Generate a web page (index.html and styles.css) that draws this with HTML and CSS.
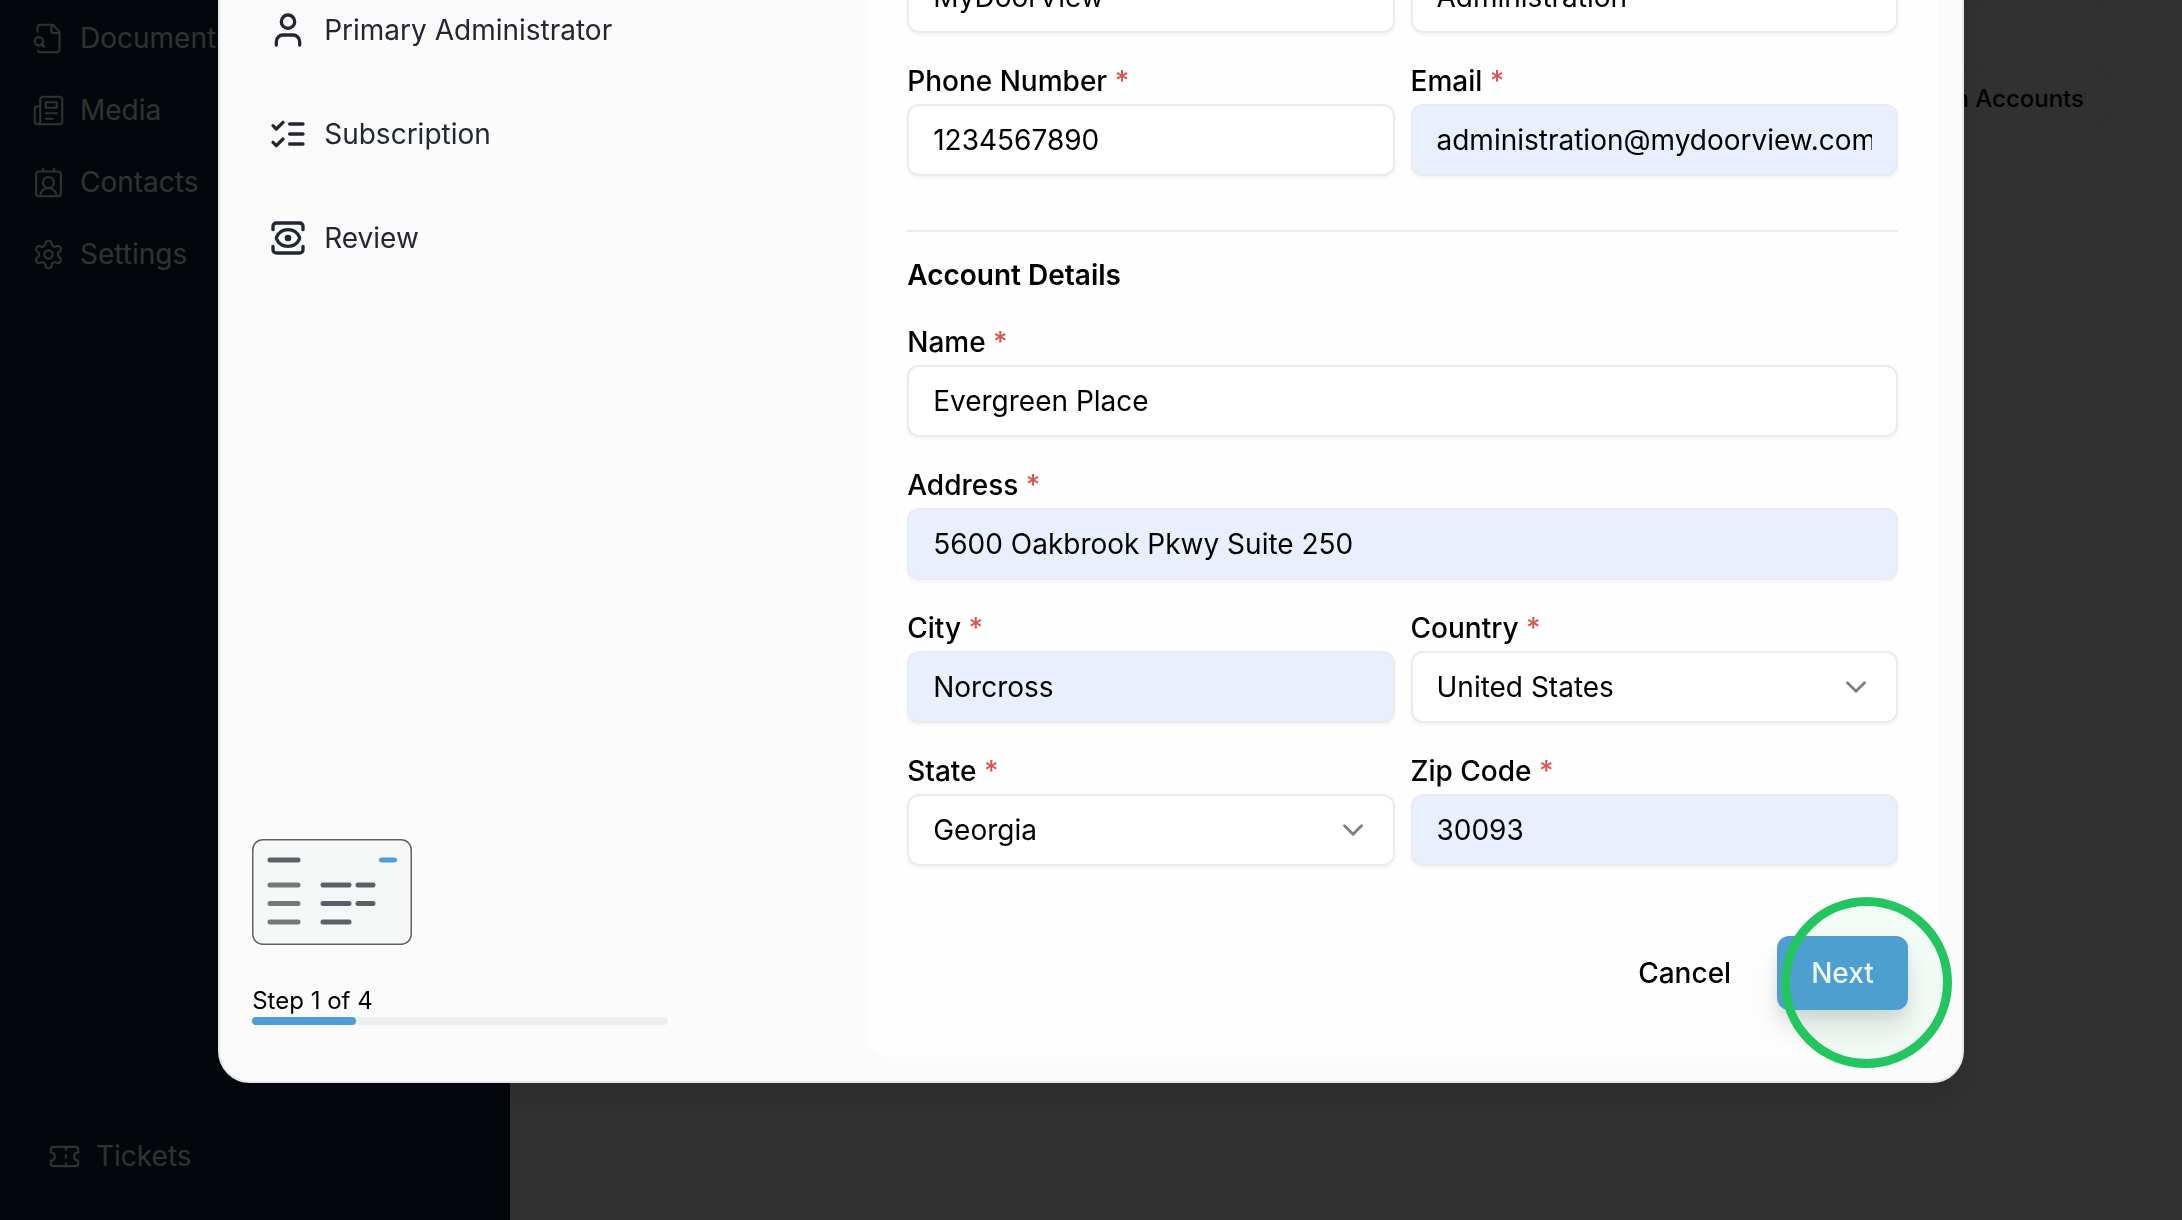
FILE: index.html
```html
<!DOCTYPE html>
<html lang="en">
<head>
<meta charset="UTF-8" />
<meta name="viewport" content="width=device-width, initial-scale=1" />
<title>MyDoorView - New Account</title>
<link rel="stylesheet" href="styles.css">
</head>
<body>
  <div class="app">
    <aside class="sidebar">
      <nav class="sidebar-nav">
        <a href="#" class="nav-link">
          <svg class="nav-icon" viewBox="0 0 24 24"><path d="M14 2v4a2 2 0 0 0 2 2h4"/><path d="M4.268 21a2 2 0 0 0 1.727 1H18a2 2 0 0 0 2-2V7l-5-5H6a2 2 0 0 0-2 2v3"/><path d="m9 18-1.5-1.5"/><circle cx="5" cy="14" r="3"/></svg>
          Documents
        </a>
        <a href="#" class="nav-link">
          <svg class="nav-icon" viewBox="0 0 24 24"><path d="M4 22h16a2 2 0 0 0 2-2V4a2 2 0 0 0-2-2H8a2 2 0 0 0-2 2v16a2 2 0 0 1-2 2Zm0 0a2 2 0 0 1-2-2v-9c0-1.1.9-2 2-2h2"/><path d="M18 14h-8"/><path d="M15 18h-5"/><path d="M10 6h8v4h-8V6Z"/></svg>
          Media
        </a>
        <a href="#" class="nav-link">
          <svg class="nav-icon" viewBox="0 0 24 24"><path d="M16 2v2"/><path d="M17.915 22a6 6 0 0 0-12 0"/><path d="M8 2v2"/><circle cx="12" cy="12" r="4"/><rect x="3" y="4" width="18" height="18" rx="2"/></svg>
          Contacts
        </a>
        <a href="#" class="nav-link">
          <svg class="nav-icon" viewBox="0 0 24 24"><path d="M12.22 2h-.44a2 2 0 0 0-2 2v.18a2 2 0 0 1-1 1.73l-.43.25a2 2 0 0 1-2 0l-.15-.08a2 2 0 0 0-2.73.73l-.22.38a2 2 0 0 0 .73 2.73l.15.1a2 2 0 0 1 1 1.72v.51a2 2 0 0 1-1 1.74l-.15.09a2 2 0 0 0-.73 2.73l.22.38a2 2 0 0 0 2.73.73l.15-.08a2 2 0 0 1 2 0l.43.25a2 2 0 0 1 1 1.73V20a2 2 0 0 0 2 2h.44a2 2 0 0 0 2-2v-.18a2 2 0 0 1 1-1.73l.43-.25a2 2 0 0 1 2 0l.15.08a2 2 0 0 0 2.73-.73l.22-.39a2 2 0 0 0-.73-2.73l-.15-.08a2 2 0 0 1-1-1.74v-.5a2 2 0 0 1 1-1.74l.15-.09a2 2 0 0 0 .73-2.73l-.22-.38a2 2 0 0 0-2.73-.73l-.15.08a2 2 0 0 1-2 0l-.43-.25a2 2 0 0 1-1-1.73V4a2 2 0 0 0-2-2z"/><circle cx="12" cy="12" r="3"/></svg>
          Settings
        </a>
      </nav>
      <nav class="sidebar-footer">
        <a href="#" class="nav-link">
          <svg class="nav-icon" viewBox="0 0 24 24"><path d="M2 9a3 3 0 0 1 0 6v2a2 2 0 0 0 2 2h16a2 2 0 0 0 2-2v-2a3 3 0 0 1 0-6V7a2 2 0 0 0-2-2H4a2 2 0 0 0-2 2Z"/><path d="M13 5v2"/><path d="M13 17v2"/><path d="M13 11v2"/></svg>
          Tickets
        </a>
      </nav>
    </aside>

    <main class="main">
      <div class="toolbar"></div>
      <button type="button" class="accounts-btn">Open Accounts</button>
    </main>
  </div>

  <div class="overlay">
    <div class="modal" role="dialog" aria-label="New account">
      <div class="steps">
        <ol class="step-list">
          <li class="step">
            <svg class="step-icon" viewBox="0 0 24 24"><rect x="4" y="2" width="16" height="20" rx="2"/><path d="M9 22v-4h6v4"/></svg>
            Account
          </li>
          <li class="step">
            <svg class="step-icon" viewBox="0 0 24 24"><path d="M19 21v-2a4 4 0 0 0-4-4H9a4 4 0 0 0-4 4v2"/><circle cx="12" cy="7" r="4"/></svg>
            Primary Administrator
          </li>
          <li class="step">
            <svg class="step-icon" viewBox="0 0 24 24"><path d="m3 17 2 2 4-4"/><path d="m3 7 2 2 4-4"/><path d="M13 6h8"/><path d="M13 12h8"/><path d="M13 18h8"/></svg>
            Subscription
          </li>
          <li class="step">
            <svg class="step-icon" viewBox="0 0 24 24"><path d="M21 17v2a2 2 0 0 1-2 2H5a2 2 0 0 1-2-2v-2"/><path d="M21 7V5a2 2 0 0 0-2-2H5a2 2 0 0 0-2 2v2"/><circle cx="12" cy="12" r="1"/><path d="M18.944 12.33a1 1 0 0 0 0-.66 7.5 7.5 0 0 0-13.888 0 1 1 0 0 0 0 .66 7.5 7.5 0 0 0 13.888 0"/></svg>
            Review
          </li>
        </ol>

        <div class="progress-box">
          <svg class="preview" viewBox="0 0 160 106">
            <rect x="0.75" y="0.75" width="158.5" height="104.5" rx="10" fill="#f6f8f8" stroke="#5f6165" stroke-width="1.5"/>
            <g stroke-width="5" stroke-linecap="round" fill="none">
              <path d="M18 21h28M71 46h26M106 46h15M71 64.500h26M106 64.500h15M71 83h26" stroke="#5c5f65"/>
              <path d="M18 46h28M18 64.500h28M18 83h28" stroke="#757779"/>
              <path d="M129.500 21h13" stroke="#509dd6"/>
            </g>
          </svg>
          <p class="step-count" id="step-count">Step 1 of 4</p>
          <div class="progress" role="progressbar" aria-labelledby="step-count" aria-valuenow="25">
            <div class="progress-fill" style="width: 25%"></div>
          </div>
        </div>
      </div>

      <form class="panel">
        <div class="fields">
          <div class="field">
            <label for="first-name">First Name <span class="req">*</span></label>
            <input type="text" id="first-name" value="MyDoorView">
          </div>
          <div class="field">
            <label for="last-name">Last Name <span class="req">*</span></label>
            <input type="text" id="last-name" value="Administration">
          </div>
          <div class="field">
            <label for="phone">Phone Number <span class="req">*</span></label>
            <input type="tel" id="phone" value="1234567890">
          </div>
          <div class="field">
            <label for="email">Email <span class="req">*</span></label>
            <input type="email" id="email" class="filled" value="administration@mydoorview.com">
          </div>
        </div>

        <hr>

        <h2>Account Details</h2>
        <div class="fields">
          <div class="field wide">
            <label for="name">Name <span class="req">*</span></label>
            <input type="text" id="name" value="Evergreen Place">
          </div>
          <div class="field wide">
            <label for="address">Address <span class="req">*</span></label>
            <input type="text" id="address" class="filled" value="5600 Oakbrook Pkwy Suite 250">
          </div>
          <div class="field">
            <label for="city">City <span class="req">*</span></label>
            <input type="text" id="city" class="filled" value="Norcross">
          </div>
          <div class="field">
            <label for="country">Country <span class="req">*</span></label>
            <div class="select">
              <select id="country">
                <option>United States</option>
              </select>
              <svg class="chevron" viewBox="0 0 24 24"><path d="m6 9 6 6 6-6"/></svg>
            </div>
          </div>
          <div class="field">
            <label for="state">State <span class="req">*</span></label>
            <div class="select">
              <select id="state">
                <option>Georgia</option>
              </select>
              <svg class="chevron" viewBox="0 0 24 24"><path d="m6 9 6 6 6-6"/></svg>
            </div>
          </div>
          <div class="field">
            <label for="zip">Zip Code <span class="req">*</span></label>
            <input type="text" id="zip" class="filled" value="30093">
          </div>
        </div>

        <div class="actions">
          <button type="button" class="btn">Cancel</button>
          <button type="submit" class="btn btn-primary">Next</button>
        </div>
      </form>

      <div class="click-ring"></div>
    </div>
  </div>
</body>
</html>
```
FILE: styles.css
```css
* {
  box-sizing: border-box;
}
body {
  margin: 0;
  font-family: Inter, "Liberation Sans", sans-serif;
  font-size: 28px;
  line-height: 40px;
  color: #000;
  overflow: hidden;
}
svg {
  flex: none;
  fill: none;
  stroke: currentColor;
  stroke-linecap: round;
  stroke-linejoin: round;
}

/* page behind the dialog */
.app {
  display: flex;
  height: 100vh;
  background: #f2f2f2;
}
.sidebar {
  display: flex;
  flex-direction: column;
  justify-content: space-between;
  width: 510px;
  padding: 18px 32px 44px;
  background: #0f2339;
}
.sidebar-nav {
  display: flex;
  flex-direction: column;
  gap: 32px;
}
.sidebar-footer {
  padding-left: 16px;
}
.nav-link {
  display: flex;
  align-items: center;
  gap: 15px;
  color: #f2f2f2;
  text-decoration: none;
}
.nav-icon {
  width: 33px;
  height: 33px;
  stroke-width: 1.5;
}
.main {
  flex: 1;
  display: flex;
  flex-direction: column;
  align-items: flex-end;
  padding-right: 74px;
}
.toolbar {
  width: 100%;
  height: 6px;
  margin-bottom: 61px;
  border-bottom: 2px solid #e8e8e8;
  border-radius: 0 0 24px 0;
}
.accounts-btn {
  height: 62px;
  padding: 0 22px;
  font: 500 24px Inter, "Liberation Sans", sans-serif;
  color: #000;
  background: #f4f4f4;
  border: 2px solid #eaeaea;
  border-radius: 12px;
}

/* dialog */
.overlay {
  position: fixed;
  inset: 0;
  display: flex;
  justify-content: center;
  align-items: flex-end;
  padding-bottom: 137px;
  background: rgba(0, 0, 0, 0.8);
}
.modal {
  position: relative;
  display: grid;
  grid-template-columns: 615px 1fr;
  width: 80vw;
  padding: 24px 24px 24px 32px;
  background: #fbfbfb;
  border: 2px solid #e5e8ea;
  border-radius: 32px;
  box-shadow: 0 20px 30px rgba(0, 0, 0, 0.1);
}
.steps {
  display: flex;
  flex-direction: column;
  justify-content: space-between;
  padding: 22px 0 32px;
}
.step-list {
  display: flex;
  flex-direction: column;
  gap: 64px;
  margin: 0;
  padding: 0 16px;
  list-style: none;
}
.step {
  display: flex;
  align-items: center;
  gap: 16px;
  color: #23272f;
}
.step-icon {
  width: 40px;
  height: 40px;
  stroke-width: 2;
}
.progress-box {
  width: 416px;
}
.preview {
  display: block;
  width: 160px;
  height: 106px;
}
.step-count {
  margin: 40px 0 0;
  font-size: 24px;
  line-height: 32px;
}
.progress {
  height: 8px;
  background: #eceff2;
  border-radius: 4px;
}
.progress-fill {
  height: 100%;
  background: #509dd6;
  border-radius: 4px;
}

.panel {
  padding: 40px 40px 47px;
  background: #fefefe;
  border-radius: 24px;
}
.fields {
  display: grid;
  grid-template-columns: 1fr 1fr;
  gap: 34px 16px;
}
.field {
  min-width: 0;
}
.wide {
  grid-column: span 2;
}
label {
  display: block;
  margin-bottom: 9px;
  font-weight: 500;
  line-height: 28px;
}
.req {
  color: #d9534f;
}
input,
select {
  display: block;
  width: 100%;
  height: 72px;
  padding: 0 24px;
  font: inherit;
  color: #000;
  background: #fff;
  border: 2px solid #e9ecee;
  border-radius: 12px;
  box-shadow: 0 2px 4px rgba(0, 0, 0, 0.05);
  appearance: none;
}
.filled {
  background: #e9effd;
}
.select {
  position: relative;
}
.chevron {
  position: absolute;
  top: 19px;
  right: 25px;
  width: 34px;
  height: 34px;
  color: #808080;
  stroke-width: 2;
  pointer-events: none;
}
hr {
  height: 2px;
  margin: 54px 0 29px;
  background: #e9ecee;
  border: 0;
}
h2 {
  margin: 0 0 39px;
  font-size: 28px;
  font-weight: 600;
  line-height: 28px;
}
.actions {
  display: flex;
  justify-content: flex-end;
  gap: 12px;
  margin: 70px -10px 0 0;
}
.btn {
  height: 74px;
  padding: 0 34px;
  font: inherit;
  font-weight: 500;
  color: #000;
  background: none;
  border: 0;
  border-radius: 12px;
  cursor: pointer;
}
.btn-primary {
  color: #f8fafc;
  background: #509dd6;
  box-shadow: 0 20px 30px rgba(0, 0, 0, 0.1), 0 8px 12px rgba(0, 0, 0, 0.06);
}

.click-ring {
  position: absolute;
  right: 10px;
  bottom: 13px;
  width: 171px;
  height: 171px;
  background: rgba(34, 197, 94, 0.05);
  border: 9px solid #22c55e;
  border-radius: 50%;
  pointer-events: none;
}
```
